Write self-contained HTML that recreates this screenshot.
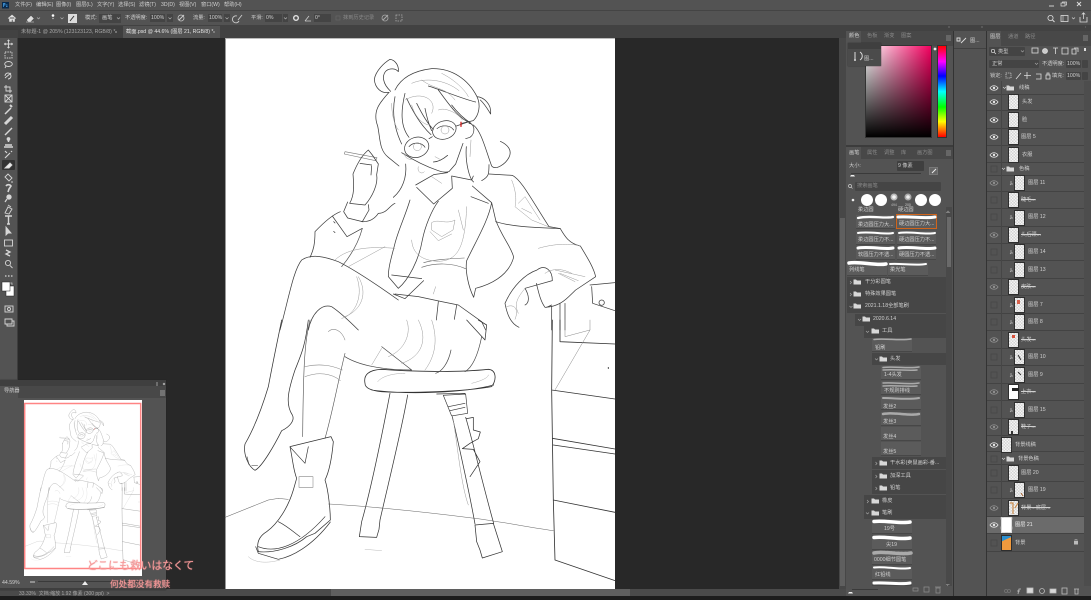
<!DOCTYPE html>
<html><head><meta charset="utf-8"><title>PS</title>
<style>
html,body{margin:0;padding:0;background:#1e1e1e}
#p{position:relative;width:1091px;height:600px;overflow:hidden;background:#535353;font-family:"Liberation Sans","Noto Sans CJK SC",sans-serif;filter:blur(.3px)}
.b{position:absolute}
.t{position:absolute;white-space:nowrap;line-height:1;font-size:5.2px;color:#d0d0d0;margin-top:1.300px}
.d{color:#8a8a8a}
.f{position:absolute;background:#3f3f3f;border-radius:1px}
.r{position:absolute;left:987px;width:97px;border-bottom:1px solid #434343;box-sizing:border-box}
.k{position:absolute;left:847px;background:#464646;height:12px}
.c{position:absolute;background:#5b5b5b;height:14px;box-sizing:border-box;border-bottom:1px solid #474747}
.th{position:absolute;width:9px;height:14px;outline:1px solid #2e2e2e;background-color:#f4f4f4;background-image:linear-gradient(45deg,#d4d4d4 25%,transparent 25%,transparent 75%,#d4d4d4 75%),linear-gradient(45deg,#d4d4d4 25%,transparent 25%,transparent 75%,#d4d4d4 75%);background-size:3px 3px;background-position:0 0,1.500px 1.500px}
svg{position:absolute;left:0;top:0;overflow:visible}
</style></head><body><div id="p">
<!-- base regions -->
<div class="b" style="left:0;top:10px;width:1091px;height:1px;background:#444"></div>
<div class="b" style="left:0;top:25px;width:1091px;height:13px;background:#424242"></div>
<div class="b" style="left:18px;top:26px;width:105px;height:12px;background:#3e3e3e"></div>
<div class="b" style="left:123px;top:26px;width:97px;height:12px;background:#535353"></div>
<div class="b" style="left:0;top:26px;width:18px;height:6px;background:#424242"></div>
<div class="b" style="left:18px;top:38px;width:821px;height:551px;background:#282828"></div>
<div class="b" style="left:225px;top:38px;width:390px;height:551px;background:#fff;border-left:1px solid #999;border-top:1px solid #bbb;box-sizing:border-box"></div>
<!-- vertical scrollbar -->
<div class="b" style="left:839px;top:38px;width:7px;height:558px;background:#474747"></div>
<div class="b" style="left:840px;top:218px;width:5px;height:368px;background:#5f5f5f"></div>
<!-- bottom -->
<div class="b" style="left:0;top:589px;width:846px;height:7px;background:#4a4a4a"></div>
<div class="b" style="left:331px;top:589px;width:299px;height:7px;background:#5f5f5f"></div>
<div class="b" style="left:0;top:596px;width:1091px;height:4px;background:#1c1c1c"></div>
<!-- right docks -->
<div class="b" style="left:846px;top:26px;width:245px;height:5px;background:#424242"></div>
<div class="b" style="left:846px;top:31px;width:107px;height:565px;background:#535353"></div>
<div class="b" style="left:953px;top:31px;width:1px;height:565px;background:#333"></div>
<div class="b" style="left:954px;top:31px;width:32px;height:565px;background:#535353"></div>
<div class="b" style="left:986px;top:31px;width:1px;height:565px;background:#333"></div>
<div class="b" style="left:987px;top:31px;width:104px;height:565px;background:#535353"></div>
<div class="b" style="left:954px;top:48px;width:32px;height:1px;background:#414141"></div>
<div class="b" style="left:846px;top:31px;width:107px;height:15px;background:#484848"></div>
<div class="b" style="left:846px;top:31px;width:15px;height:15px;background:#535353"></div>
<div class="b" style="left:846px;top:145px;width:107px;height:2px;background:#3c3c3c"></div>
<div class="b" style="left:846px;top:147px;width:107px;height:12px;background:#484848"></div>
<div class="b" style="left:846px;top:147px;width:15px;height:12px;background:#535353"></div>
<div class="b" style="left:987px;top:31px;width:104px;height:15px;background:#484848"></div>
<div class="b" style="left:987px;top:31px;width:14px;height:15px;background:#535353"></div>
<div class="b" style="left:1084px;top:81px;width:7px;height:505px;background:#4d4d4d"></div>
<!-- colour -->
<div class="b" style="left:866px;top:46px;width:65px;height:91px;outline:1px solid #333;background:linear-gradient(to bottom,rgba(0,0,0,0),#000),linear-gradient(to right,#fff,#f2005f)"></div>
<div class="b" style="left:938px;top:46px;width:8px;height:91px;outline:1px solid #333;background:linear-gradient(to bottom,#f00 0%,#f0f 17%,#00f 33%,#0ff 50%,#0f0 67%,#ff0 83%,#f00 100%)"></div>
<div class="b" style="left:848px;top:43px;width:33px;height:23px;background:#4b4b4b;box-shadow:0 0 1px #222"></div>
<div class="b" style="left:848px;top:43px;width:33px;height:6px;background:#3f3f3f"></div>
<!-- brush fields -->
<div class="f" style="left:897px;top:161px;width:27px;height:10px"></div>
<div class="b" style="left:929px;top:167px;width:9px;height:8px;background:#666;border:1px solid #777;box-sizing:border-box"></div>
<div class="b" style="left:851px;top:173px;width:70px;height:1px;background:#3a3a3a"></div>
<div class="f" style="left:855px;top:182px;width:86px;height:9px;background:#454545"></div>
<div class="b" style="left:946px;top:207px;width:6px;height:382px;background:#494949"></div>
<div class="b" style="left:947px;top:217px;width:4px;height:50px;background:#6a6a6a"></div>
<!-- brush cells -->
<div class="c" style="left:856px;top:215px;width:39px"></div>
<div class="c" style="left:856px;top:231px;width:39px"></div>
<div class="c" style="left:897px;top:231px;width:39px"></div>
<div class="c" style="left:856px;top:246px;width:39px"></div>
<div class="c" style="left:897px;top:246px;width:39px"></div>
<div class="c" style="left:847px;top:262px;width:40px"></div>
<div class="c" style="left:888px;top:262px;width:40px"></div>
<div class="b" style="left:896px;top:214px;width:41px;height:15px;background:#5b5b5b;border:1.300px solid #d0651c;box-sizing:border-box"></div>
<!-- tree rows -->
<div class="k" style="top:277px;width:99px"></div>
<div class="k" style="top:289px;width:99px"></div>
<div class="k" style="top:301px;width:99px"></div>
<div class="k" style="left:855px;top:314px;width:91px"></div>
<div class="k" style="left:864px;top:326px;width:82px"></div>
<div class="c" style="left:872px;top:338px;width:40px"></div>
<div class="k" style="left:872px;top:353px;width:74px"></div>
<div class="c" style="left:881px;top:366px;width:40px"></div>
<div class="c" style="left:881px;top:381px;width:40px"></div>
<div class="c" style="left:881px;top:396px;width:40px"></div>
<div class="c" style="left:881px;top:412px;width:40px"></div>
<div class="c" style="left:881px;top:427px;width:40px"></div>
<div class="c" style="left:881px;top:442px;width:40px"></div>
<div class="k" style="left:872px;top:457px;width:74px"></div>
<div class="k" style="left:872px;top:470px;width:74px"></div>
<div class="k" style="left:872px;top:482px;width:74px"></div>
<div class="k" style="left:864px;top:495px;width:82px"></div>
<div class="k" style="left:864px;top:507px;width:82px"></div>
<div class="c" style="left:872px;top:520px;width:40px"></div>
<div class="c" style="left:872px;top:536px;width:40px"></div>
<div class="c" style="left:872px;top:551px;width:40px"></div>
<div class="c" style="left:872px;top:566px;width:40px"></div>
<div class="c" style="left:872px;top:581px;width:40px;height:5px"></div>
<div class="b" style="left:846px;top:586px;width:107px;height:10px;background:#535353"></div>
<!-- layer controls -->
<div class="f" style="left:989px;top:47px;width:36px;height:9px;background:#444"></div>
<div class="f" style="left:989px;top:60px;width:50px;height:8px;background:#444"></div>
<div class="f" style="left:1066px;top:60px;width:15px;height:8px;background:#444"></div>
<div class="f" style="left:1082px;top:60px;width:6px;height:8px;background:#444"></div>
<div class="f" style="left:1066px;top:72px;width:15px;height:8px;background:#444"></div>
<div class="f" style="left:1082px;top:72px;width:6px;height:8px;background:#444"></div>
<!-- layer rows -->
<div class="r" style="top:81px;height:14px"></div>
<div class="r" style="top:95px;height:16px"></div>
<div class="r" style="top:111px;height:18px"></div>
<div class="r" style="top:129px;height:17px"></div>
<div class="r" style="top:146px;height:17px"></div>
<div class="r" style="top:163px;height:13px"></div>
<div class="r" style="top:176px;height:16px"></div>
<div class="r" style="top:192px;height:17px"></div>
<div class="r" style="top:209px;height:18px"></div>
<div class="r" style="top:227px;height:17px"></div>
<div class="r" style="top:244px;height:17px"></div>
<div class="r" style="top:261px;height:18px"></div>
<div class="r" style="top:279px;height:17px"></div>
<div class="r" style="top:296px;height:18px"></div>
<div class="r" style="top:314px;height:17px"></div>
<div class="r" style="top:331px;height:18px"></div>
<div class="r" style="top:349px;height:17px"></div>
<div class="r" style="top:366px;height:18px"></div>
<div class="r" style="top:384px;height:17px"></div>
<div class="r" style="top:401px;height:18px"></div>
<div class="r" style="top:419px;height:17px"></div>
<div class="r" style="top:436px;height:16px"></div>
<div class="r" style="top:452px;height:13px"></div>
<div class="r" style="top:465px;height:17px"></div>
<div class="r" style="top:482px;height:17px"></div>
<div class="r" style="top:499px;height:18px"></div>
<div class="r" style="top:517px;height:17px;background:#6b6b6b"></div>
<div class="r" style="top:534px;height:18px"></div>
<div class="b" style="left:1001px;top:81px;width:1px;height:471px;background:#464646"></div>
<!-- thumbs -->
<div class="th" style="left:1009px;top:95px"></div>
<div class="th" style="left:1009px;top:113px"></div>
<div class="th" style="left:1009px;top:130px"></div>
<div class="th" style="left:1009px;top:148px"></div>
<div class="th" style="left:1015px;top:176px"></div>
<div class="th" style="left:1009px;top:193px"></div>
<div class="th" style="left:1015px;top:211px"></div>
<div class="th" style="left:1009px;top:228px"></div>
<div class="th" style="left:1015px;top:245px"></div>
<div class="th" style="left:1015px;top:263px"></div>
<div class="th" style="left:1009px;top:280px"></div>
<div class="th" style="left:1015px;top:298px"></div>
<div class="th" style="left:1015px;top:315px"></div>
<div class="th" style="left:1009px;top:333px"></div>
<div class="th" style="left:1015px;top:350px"></div>
<div class="th" style="left:1015px;top:368px"></div>
<div class="th" style="left:1009px;top:385px;background:#fff"></div>
<div class="th" style="left:1015px;top:403px"></div>
<div class="th" style="left:1009px;top:420px"></div>
<div class="th" style="left:1002px;top:438px"></div>
<div class="th" style="left:1009px;top:466px"></div>
<div class="th" style="left:1015px;top:483px"></div>
<div class="th" style="left:1009px;top:501px"></div>
<div class="b" style="left:1002px;top:518px;width:9px;height:14px;background:#fff;outline:1px solid #ddd"></div>
<div class="b" style="left:1002px;top:536px;width:9px;height:14px;background:linear-gradient(155deg,#2a8fd0 28%,#f09a3e 30%);outline:1px solid #2e2e2e"></div>
<!-- nav panel -->
<div class="b" style="left:0;top:380px;width:166px;height:210px;background:#535353;box-shadow:0 0 1px #222"></div>
<div class="b" style="left:0;top:380px;width:166px;height:6px;background:#3f3f3f"></div>
<div class="b" style="left:0;top:386px;width:166px;height:12px;background:#484848"></div>
<div class="b" style="left:0;top:386px;width:18px;height:12px;background:#535353"></div>
<div class="b" style="left:24px;top:400px;width:118px;height:176px;background:#fff"></div>
<div class="b" style="left:0;top:588px;width:166px;height:2px;background:#3e3e3e"></div>
<!-- toolbar selected -->
<div class="b" style="left:2px;top:160px;width:13px;height:10px;background:#333;border-radius:1px"></div>
<div class="b" style="left:17px;top:38px;width:1px;height:342px;background:#3d3d3d"></div>
<div class="b" style="left:0;top:26px;width:18px;height:4px;background:#3d3d3d"></div>

<svg width="1091" height="600" viewBox="0 0 1091 600" fill="none">
<defs>
<g id="eye"><path d="M-4 0C-2-3 2-3 4 0C2 3-2 3-4 0Z" fill="none" stroke="#e6e6e6" stroke-width=".8"/><circle r="1.200" fill="#e6e6e6"/></g>
<g id="ed"><path d="M-4 0C-2-3 2-3 4 0C2 3-2 3-4 0Z" fill="none" stroke="#8f8f8f" stroke-width=".8"/><circle r="1.200" fill="#8f8f8f"/></g>
<g id="fo"><path d="M-3.500-2.500h2.500l1 1h4v4h-7.500Z" fill="#d8d8d8"/></g>
<g id="clip"><path d="M-1-2v3h2M-1 1l-1 1" stroke="#c0c0c0" stroke-width=".7"/></g>
<g id="art" fill="none" stroke-linecap="round" stroke-linejoin="round">
<g transform="translate(225 40) scale(.33333)" stroke="#3c3c3c" stroke-width="2.200">
<path d="M492 157C470 162 450 145 448 118C452 92 478 68 495 58C512 60 522 78 520 95C512 85 495 84 484 92C470 106 472 130 497 154"/>
<path d="M510 150C530 110 570 92 620 86C680 84 730 118 756 170C775 172 800 190 797 222C792 215 782 195 766 180M756 170C768 195 762 225 745 242L710 250"/>
<path d="M492 157C462 190 442 215 458 258C466 295 462 330 490 352L522 378"/>
<path d="M540 160C528 210 525 258 552 292M510 170C500 220 510 270 530 312M545 175C566 220 590 258 618 284M575 190C590 220 606 250 625 268M600 205C606 235 612 255 620 272M610 138C650 150 716 178 752 186M640 150C670 190 700 236 738 250M680 195C695 215 715 235 738 250"/>
<ellipse cx="658" cy="270" rx="36" ry="27" transform="rotate(-18 658 270)"/>
<ellipse cx="575" cy="322" rx="37" ry="30" transform="rotate(-18 575 322)"/>
<path d="M612 296L622 290M694 258L732 245"/>
<path d="M636 266C650 254 675 254 686 270M552 320C565 305 590 306 600 322" stroke-width="2"/>
<path d="M530 338C552 352 590 375 640 392C652 397 664 397 672 395L692 372L714 310M625 366C642 366 656 356 668 346"/>
<path d="M732 250C750 250 752 280 735 292L722 296M745 255C770 275 782 330 800 378C812 392 842 372 852 352C862 332 850 315 826 304M724 320C720 368 734 418 746 426M792 374C792 402 792 410 770 422"/>
<path d="M542 372C546 412 532 450 505 472"/>
<path d="M572 435L626 404L668 398M575 442L626 492L682 445L680 408L740 420L745 408"/>
<path d="M510 490C492 498 486 520 460 520C447 540 430 546 410 545"/>
<path d="M360 335L456 353L452 362L358 342Z" stroke="#777" stroke-width="1.800"/>
<path d="M384 402C392 382 408 348 430 330L442 345L460 372L455 404C460 432 442 470 420 495L374 490C390 462 386 430 384 402ZM405 370L440 375M440 378L438 405"/>
<path d="M368 486L356 515L368 534L412 545L432 510L430 494"/>
<path d="M346 515C320 525 288 556 270 575C270 610 266 630 255 652M322 528L366 590L412 565M326 545l4 4M326 574l4 4"/>
<path d="M412 565C400 610 375 650 350 680" stroke="#555"/>
<path d="M555 480C540 530 520 570 510 610C500 650 490 680 490 710L520 745C550 720 582 660 592 600C600 560 620 510 640 484"/>
<path d="M742 438L800 488C790 540 760 590 725 662C720 692 730 740 746 772L752 745C792 735 850 710 866 652C860 622 830 590 812 540L800 488M738 470L790 490"/>
<path d="M792 402L862 406C890 420 920 480 972 560L1006 566C1020 590 1032 610 1066 618C1085 650 1105 680 1112 710L1052 750C1030 770 1010 800 960 802C945 782 940 752 934 730"/>
<path d="M812 545C860 560 920 562 1006 566"/>
<path d="M936 690C900 702 862 740 840 790C846 822 856 850 882 862M936 690C960 672 982 690 982 722L900 745C915 770 912 790 900 795"/>
<path d="M590 682C630 668 680 668 722 686M596 668C630 658 680 656 718 654" stroke="#666" stroke-width="1.800"/>
<path d="M500 705L590 716M505 762L540 776L596 722"/>
<path d="M510 762L580 770L650 785L700 795L770 845L782 870M640 785L634 840M695 795L688 838"/>
<path d="M165 870C190 780 205 690 230 660C260 640 300 650 340 665C390 690 450 730 520 780M250 870C260 820 290 790 320 800C350 820 380 850 400 870"/>
<path d="M1095 735L1170 728M1100 740L1103 790L1170 812M980 800L980 870M1005 790L1005 870M1020 790V870M965 802L980 795"/>
<circle cx="1130" cy="788" r="8"/>
<g stroke="#9a9a9a" stroke-width="1.500">
<path d="M860 420C880 470 870 500 870 500L920 540L970 560M880 490L900 470L945 540M890 505L920 520"/>
<path d="M620 548C640 535 662 555 690 540L684 570L650 590L620 570ZM615 575L640 602L680 582M700 510L715 570M560 600C562 640 590 662 640 664C700 662 720 620 725 500M400 710C430 760 410 810 360 830M395 710C420 780 380 830 350 835M940 625C990 610 1040 610 1066 618M990 690L1080 710M1000 700L1050 725M330 660C370 620 450 620 510 625M480 620L370 680"/>
<path d="M540 180C590 150 640 180 620 220M560 130C600 112 660 118 702 152M650 100C690 120 720 150 730 170M590 120C630 150 660 140 690 180M500 190C500 215 505 250 520 270M560 195C570 230 590 250 610 255M640 210C660 200 700 220 712 240M630 350L645 358M580 380C575 395 590 405 598 395M620 410L650 430M632 740L625 762M738 300L735 350M648 270a12 12 0 1 0 24 0a12 12 0 1 0-24 0M565 320a12 12 0 1 0 24 0a12 12 0 1 0-24 0M540 340C535 350 550 360 560 358"/>
<path d="M900 745C880 770 865 790 880 820M845 800C870 790 882 810 870 838M1005 700L1060 722M960 700C990 680 1020 690 1040 700"/>
</g>
<path d="M708 247v12" stroke="#d02020" stroke-width="4"/>
</g>
<g transform="translate(225 320) scale(.33333)" stroke="#333" stroke-width="2.200">
<path d="M170 0C160 50 145 120 130 200C112 260 90 320 60 372C54 402 70 440 90 451C112 440 150 372 170 332C196 320 210 300 202 285C180 252 190 210 210 150C230 100 240 80 250 0"/>
<path d="M66 410l6 24M80 436h18" stroke-width="1.600"/>
<path d="M255 0C240 60 235 120 233 350M360 100C340 180 322 280 300 355" stroke="#555" stroke-width="1.900"/>
<path d="M240 140C280 130 320 135 352 150M240 170C280 155 320 160 346 182M310 35C325 20 350 30 360 60" stroke="#888" stroke-width="1.600"/>
<path d="M195 380L318 350L325 365C320 420 310 460 300 480C310 510 316 570 316 600L270 640L245 650C210 680 150 700 100 695C94 670 100 650 125 635C160 610 190 560 205 510L215 475C205 450 205 430 195 380Z"/>
<path d="M92 680L100 700L160 718C200 710 260 680 316 606M100 680C150 700 220 680 300 590M196 382L240 430L250 380M160 605C190 620 210 640 225 650" stroke-width="2"/>
<rect x="222" y="470" width="42" height="32" stroke="#888" stroke-width="1.700"/>
<path d="M420 190C415 165 430 150 470 148C560 155 700 158 790 148C815 150 815 180 800 200C720 215 550 220 470 215C440 212 420 205 420 190ZM440 210C550 225 720 218 806 195" stroke-width="2.400"/>
<path d="M458 185C470 170 500 160 540 160M740 190C760 185 790 175 790 165" stroke="#aaa" stroke-width="1.500"/>
<path d="M495 220C470 350 440 500 410 605L403 650L455 652L462 628L465 600M548 225C530 330 490 490 465 600"/>
<path d="M635 222L720 220M655 226L722 222L728 280L680 288ZM670 260L720 250M675 272L720 262" stroke-width="1.900"/>
<path d="M682 290C700 370 730 500 750 612M722 292C745 370 770 480 806 610M725 296L745 292L745 330L766 336L760 356L735 370L712 386L745 388L765 425L735 470"/>
<path d="M685 300C700 400 710 500 730 555" stroke="#999" stroke-width="1.500"/>
<path d="M750 615L805 610L832 695L772 714L765 690L755 665Z"/>
<path d="M0 592L130 540L160 535L190 538M310 552C380 555 550 570 750 595C830 605 900 620 985 632" stroke="#666" stroke-width="1.600"/>
<path d="M360 110C400 135 470 150 560 150M470 80L560 150M770 50C760 100 745 140 720 155M678 90C670 130 650 155 632 160" stroke="#444" stroke-width="2"/>
<path d="M440 135L470 85M620 0C640 60 630 110 600 150M580 0C610 60 590 110 530 130M545 0C560 40 540 90 490 110" stroke="#999" stroke-width="1.500"/>
<path d="M725 0L780 60L785 15L760 0"/>
<path d="M982 0L980 210L985 540L990 720L1170 782M980 210L1170 237M982 355L1170 387M985 375L1170 402M985 540L1170 577M1005 0L1005 65L1170 72" stroke-width="2.500"/>
<path d="M1020 0L1020 50L1095 30V0M1095 30L990 210" stroke="#888" stroke-width="1.500"/>
<path d="M70 710C90 730 130 730 165 720M420 688L470 692" stroke="#bbb" stroke-width="1.500"/>
<path d="M1150 143v2" stroke="#222" stroke-width="3"/>
</g>
</g>
<clipPath id="nc"><rect x="24" y="400" width="118" height="176"/></clipPath>
</defs>
<use href="#art"/>
<!-- navigator -->
<g clip-path="url(#nc)" opacity=".8"><g transform="translate(24 403) scale(.3) translate(-225 -38)"><use href="#art"/></g></g>
<rect x="24.700" y="403.500" width="116" height="165" stroke="#ff8484" stroke-width="1.500"/>
<path d="M30 582h5" stroke="#ccc"/><path d="M38 581.500H164" stroke="#3a3a3a" stroke-width="1"/><path d="M82 585l3-4 3 4Z" fill="#eee"/>
<path d="M156 383h2M156 385h2M163 383l2 2M165 383l-2 2M160 391h5M160 393h5M160 395h5" stroke="#bbb" stroke-width=".8"/>
<!-- Ps logo -->
<rect x="2" y="2" width="7" height="6.500" fill="#0a2a4c"/><path d="M3.500 7V3.500h1.500v1.500H3.500M6 5h1.500M6 6.500h1.500" stroke="#4aa8f0" stroke-width=".7"/>
<!-- window controls -->
<path d="M1049 6h5" stroke="#ddd" stroke-width=".9"/><path d="M1061 3h4v3h-4ZM1062.500 3V2h4v3h-1" stroke="#ddd" stroke-width=".7"/><path d="M1077 2l4 4M1081 2l-4 4" stroke="#ddd" stroke-width="1"/>
<circle cx="1050.500" cy="18" r="2.600" stroke="#ddd" stroke-width=".8"/><path d="M1052.500 20l2 2" stroke="#ddd"/>
<rect x="1061" y="15.500" width="7" height="6" stroke="#ddd" stroke-width=".8"/><path d="M1063 15.500v6M1072 17.500l1.500 1.500 1.500-1.500" stroke="#ddd" stroke-width=".6"/>
<path d="M1080 17v5h7v-5M1083.500 19v-6M1081.800 14.500l1.700-1.700 1.700 1.700" stroke="#ddd" stroke-width=".8"/>
<!-- options bar icons -->
<path d="M8 18.500l4-3.500 4 3.500M9.500 17.500v4h2v-2h1.500v2h1.500v-4" fill="#e0e0e0" stroke="#e0e0e0" stroke-width=".6"/>
<path d="M27 20l4-4 2.500 2.500-3 3h-2ZM26 22h8" fill="#ddd" stroke="#ddd" stroke-width=".5"/><path d="M37 17.500l1.500 1.500 1.500-1.500M60.500 17.500l1.500 1.500 1.500-1.500" stroke="#bbb" stroke-width=".6"/>
<circle cx="53" cy="15.500" r="1.300" fill="#fff"/><circle cx="53" cy="18.500" r=".7" fill="#fff" opacity=".7"/>
<rect x="68" y="14" width="9" height="9" fill="#dcdcdc"/><path d="M70 21l4-5" stroke="#333" stroke-width="1"/>
<rect x="99" y="14" width="22" height="9" fill="#444"/><rect x="150" y="14" width="15" height="8" fill="#444"/><rect x="167" y="14" width="6" height="8" fill="#444"/><rect x="208" y="14" width="14" height="8" fill="#444"/><rect x="224" y="14" width="6" height="8" fill="#444"/><rect x="265" y="14" width="17" height="8" fill="#444"/><rect x="283" y="14" width="5" height="8" fill="#444"/><rect x="314" y="14" width="17" height="8" fill="#444"/>
<path d="M117 17.500l1.500 1.500 1.500-1.500M168.500 17.500l1.500 1.500 1.500-1.500M225.500 17.500l1.500 1.500 1.500-1.500M284 17.500l1.500 1.500 1.500-1.500" stroke="#bbb" stroke-width=".6"/>
<circle cx="181" cy="18" r="3" stroke="#ccc" stroke-width=".8"/><path d="M179 20l5-5" stroke="#ccc"/>
<path d="M237 16a3.500 3.500 0 1 0 2 5M238 20l4-5" stroke="#ccc" stroke-width=".9"/>
<circle cx="296" cy="18" r="2.300" stroke="#e4e4e4" stroke-width="1.400"/>
<path d="M305 21l4-5M305 21h6" stroke="#ccc" stroke-width=".8"/>
<rect x="336" y="16" width="4" height="4" stroke="#666" stroke-width=".7"/>
<circle cx="385" cy="18" r="3" stroke="#aaa" stroke-width=".8"/><path d="M383 20l5-5" stroke="#aaa"/>
<rect x="396" y="15" width="6" height="6" stroke="#aaa" stroke-width=".8" stroke-dasharray="1.500 1"/>
<!-- tabs close -->
<path d="M115 31l2 2M117 31l-2 2M213 31l2 2M215 31l-2 2" stroke="#aaa" stroke-width=".5"/>
<!-- toolbar icons -->
<g stroke="#d6d6d6" stroke-width=".9" fill="none">
<path d="M8.500 40v8M4.500 44h8M7.500 41l1-1 1 1M7.500 47l1 1 1-1M5.500 43l-1 1 1 1M11.500 43l1 1-1 1"/>
<rect x="5" y="52" width="7" height="6" stroke-dasharray="1.400 1"/>
<ellipse cx="8.500" cy="64" rx="3.800" ry="2.500"/><path d="M6 66l-1 2"/>
<path d="M5 78l6-5M5 76a3 3 0 1 1 3 3" /><path d="M6 85v6h6M4 87h6v6"/><rect x="5" y="95" width="7" height="7"/><path d="M5 95l7 7M12 95l-7 7"/>
<path d="M5 114l6-6" stroke-width="1.500"/><path d="M10 105l2 2" stroke-width="2"/>
<path d="M5 124l7-7" stroke-width="3"/><path d="M5 135l5-5 2-2" stroke-width="1.400"/>
<path d="M8.500 139v3M5 145h7M4 147h9" stroke-width="1.500"/><circle cx="8.500" cy="139" r="1.400" fill="#d6d6d6"/>
<path d="M5 158l5-5M5 151l2 2M11 151l1 1" stroke-width="1.200"/>
<path d="M5 168l5-5 2 2-3 3Z" fill="#eee"/>
<path d="M5 177l3-3 4 4-3 3ZM12 181v2"/>
<path d="M6 186a3 3 0 0 1 5 0l-2 3-1 3" stroke-width="1.600"/>
<circle cx="9" cy="197" r="2.200" fill="#d6d6d6"/><path d="M7 199l-2 3" stroke-width="1.200"/>
<path d="M5 213l3-6 4 2-3 5ZM8 205l3 2"/>
<path d="M5 216h7M8.500 216v8M7 224h3" stroke-width="1.400"/>
<path d="M6 227v8l2-2 3 0Z" fill="#d6d6d6"/>
<rect x="4.500" y="240" width="8" height="6"/>
<path d="M6 250l4 2-4 2 4 2" stroke-width="1.300"/>
<circle cx="8" cy="263" r="2.600"/><path d="M10 265.500l2.500 2.500"/>
<path d="M5 276h1.500M8 276h1.500M11 276h1.500" stroke-width="1.300"/>
<rect x="5" y="306" width="8" height="6"/><circle cx="9" cy="309" r="1.500"/>
<path d="M5 319h7v5h-7ZM7 324v2h7v-5h-2"/>
</g>
<rect x="3" y="283" width="3" height="3" fill="#111" stroke="#ddd" stroke-width=".5"/>
<path d="M10 283h2v2" stroke="#ccc" stroke-width=".7"/>
<rect x="6" y="286" width="8" height="10" fill="#fff" stroke="#222" stroke-width=".5"/>
<rect x="2" y="282" width="8" height="9" fill="#fff" stroke="#222" stroke-width=".5"/>
<!-- right panel small icons -->
<path d="M946 36h5M946 38h5M946 40h5M946 151h5M946 153h5M946 155h5M1083 36h5M1083 38h5M1083 40h5" stroke="#999" stroke-width=".7"/>
<path d="M948 27.500l1-1M950 27.500l-1-1M981 27.500l1-1M983 27.500l-1-1M1085 27.500l1-1" stroke="#999" stroke-width=".5"/>
<path d="M855 52v8M860 52c3 2 3 6 0 8" stroke="#ddd" stroke-width="1"/><circle cx="855" cy="60" r="1" fill="#ddd"/>
<path d="M957 38h3v3h-3Z M961 43l5-5" stroke="#ddd" stroke-width=".9"/>
<circle cx="935" cy="49" r="1.400" fill="#eee"/>
<path d="M851 175h3l1 1.500h-5Z" fill="#eee"/>
<path d="M932 173l4-4" stroke="#eee" stroke-width="1"/>
<circle cx="850" cy="186" r="1.500" stroke="#ccc" stroke-width=".7"/><path d="M851 187l1.500 1.500" stroke="#ccc" stroke-width=".6"/>
<circle cx="853" cy="200" r="1.300" fill="#eee"/>
<circle cx="867" cy="200" r="6" fill="#fff"/><circle cx="881" cy="200" r="6" fill="#fff"/><circle cx="921" cy="200" r="6" fill="#fff"/><circle cx="935" cy="200" r="6" fill="#fff"/>
<circle cx="894" cy="197" r="3.500" fill="#bbb"/><circle cx="894" cy="197" r="1.800" fill="#f4f4f4"/><circle cx="908" cy="197" r="3.500" fill="#aaa"/><circle cx="908" cy="197" r="1.800" fill="#eee"/>
<!-- brush strokes -->
<g stroke="#fff" stroke-linecap="round">
<path d="M858 218C870 215 885 219 893 217" stroke-width="2.300"/>
<path d="M898 217C910 216 925 219 935 217" stroke-width="3"/>
<path d="M858 233C870 231 885 235 893 233" stroke-width="2"/><path d="M899 233C910 231 925 235 935 233" stroke-width="2"/>
<path d="M858 248C870 246 885 250 893 248" stroke-width="3"/><path d="M899 248C910 246 925 250 935 248" stroke-width="3"/>
<path d="M849 263C860 261 875 266 886 264" stroke-width="3.500"/><path d="M890 264C900 263 915 266 926 264" stroke-width="2"/>
<path d="M874 521.500C885 520 900 524 910 522" stroke-width="3.500"/><path d="M874 537.500C885 536 900 540 910 538" stroke-width="3.500"/>
<path d="M874 567.500C885 566 900 570 910 568" stroke-width="2"/><path d="M874 583C885 582 900 585 910 583" stroke-width="3"/>
</g>
<g stroke="#aaa" stroke-linecap="round"><path d="M874 339.500C885 338 900 341 911 339" stroke-width="1.500"/><path d="M883 367.500C895 366 908 369 919 367M883 370C895 369 908 371 917 370" stroke-width="1.500"/><path d="M883 383C895 382 908 385 919 383M883 386C895 385 908 387 917 386" stroke-width="1.500"/><path d="M883 398C895 398 908 400 919 398" stroke-width="2"/><path d="M883 414C895 412 908 416 919 414" stroke-width="2.500" stroke-dasharray="3 .6"/><path d="M874 553C885 551 900 555 911 553" stroke-width="3.500" stroke-dasharray="3 .5"/></g>
<!-- tree folders -->
<use href="#fo" x="857" y="282"/><use href="#fo" x="857" y="294"/><use href="#fo" x="857" y="306"/><use href="#fo" x="866" y="319"/><use href="#fo" x="875" y="331"/><use href="#fo" x="883" y="359"/><use href="#fo" x="883" y="463"/><use href="#fo" x="883" y="476"/><use href="#fo" x="883" y="488"/><use href="#fo" x="875" y="501"/><use href="#fo" x="875" y="513"/>
<g stroke="#aaa" stroke-width=".6"><path d="M850 281l1.500 1.500-1.500 1.500M850 293l1.500 1.500-1.500 1.500M849.500 306l1.500 1.500 1.500-1.500M858 319l1.500 1.500 1.500-1.500M866 331l1.500 1.500 1.500-1.500M875 358.500l1.500 1.500 1.500-1.500M875.500 462l1.500 1.500-1.500 1.500M875.500 475l1.500 1.500-1.500 1.500M875.500 487l1.500 1.500-1.500 1.500M867 500l1.500 1.500-1.500 1.500M866 512.500l1.500 1.500 1.500-1.500"/></g>
<path d="M913 588h5v3h-5ZM924 587h5v5h-5ZM936 588h4v5h-4ZM935 587h6M948 211l-1.500 1.500h3ZM948 586l-1.500-1.500h3" stroke="#8f8f8f" stroke-width=".7"/>
<path d="M849 592h3l1 1.500h-5Z" fill="#eee"/><path d="M852 589.500h26" stroke="#3a3a3a"/>
<!-- layers filter icons -->
<circle cx="993" cy="51" r="1.700" stroke="#ddd" stroke-width=".7"/><path d="M994.500 52.500l1.500 1.500" stroke="#ddd" stroke-width=".7"/>
<path d="M1021 50.500l1.500 1.500 1.500-1.500" stroke="#aaa" stroke-width=".6"/>
<path d="M1035 63l1.500 1.500 1.500-1.500" stroke="#aaa" stroke-width=".6"/>
<g stroke="#ddd" stroke-width=".8"><rect x="1032" y="48" width="6" height="5"/><circle cx="1045" cy="51" r="2.500" fill="#ccc"/><path d="M1053 48h5M1055.500 48v6M1062 48h6v6h-6ZM1072 49h4v5h-4ZM1074 48h4v4"/><path d="M1085 48v3" stroke-width="2"/></g>
<g stroke="#ddd" stroke-width=".8"><rect x="1006" y="73" width="5" height="5" stroke-dasharray="1 .8"/><path d="M1016 79l5-6M1027 72v7M1024 75.500h7M1036 74h5v5h-5M1046 75h4v4h-4ZM1047 75v-2h2v2"/></g>
<g stroke="#ddd" stroke-width=".6"><path d="M1003 87l1.500 1.500 1.500-1.500M1002 168l1.500 1.500 1.500-1.500M1002 458l1.500 1.500 1.500-1.500"/></g>
<use href="#fo" x="1010" y="88"/><use href="#fo" x="1010" y="169"/><use href="#fo" x="1010" y="459"/>
<!-- eyes -->
<use href="#eye" x="994" y="88"/><use href="#eye" x="994" y="102"/><use href="#eye" x="994" y="120"/><use href="#eye" x="994" y="137"/><use href="#eye" x="994" y="155"/>
<use href="#ed" x="994" y="183"/><use href="#ed" x="994" y="235"/><use href="#ed" x="994" y="287"/><use href="#ed" x="994" y="340"/><use href="#ed" x="994" y="392"/><use href="#ed" x="994" y="427"/><use href="#eye" x="994" y="445"/><use href="#ed" x="994" y="508"/><use href="#eye" x="994" y="525"/>
<g stroke="#484848" stroke-width=".8"><rect x="991" y="166" width="6" height="6"/><rect x="991" y="197" width="6" height="6"/><rect x="991" y="214" width="6" height="6"/><rect x="991" y="249" width="6" height="6"/><rect x="991" y="267" width="6" height="6"/><rect x="991" y="302" width="6" height="6"/><rect x="991" y="319" width="6" height="6"/><rect x="991" y="354" width="6" height="6"/><rect x="991" y="372" width="6" height="6"/><rect x="991" y="407" width="6" height="6"/><rect x="991" y="456" width="6" height="6"/><rect x="991" y="470" width="6" height="6"/><rect x="991" y="487" width="6" height="6"/><rect x="991" y="540" width="6" height="6"/></g>
<use href="#clip" x="1012" y="183"/><use href="#clip" x="1012" y="217"/><use href="#clip" x="1012" y="252"/><use href="#clip" x="1012" y="270"/><use href="#clip" x="1012" y="305"/><use href="#clip" x="1012" y="322"/><use href="#clip" x="1012" y="357"/><use href="#clip" x="1012" y="375"/><use href="#clip" x="1012" y="410"/><use href="#clip" x="1012" y="490"/>
<!-- thumb marks -->
<rect x="1017" y="300" width="3" height="4" fill="#d8604a"/><rect x="1012" y="335" width="3" height="3" fill="#d8503a"/><rect x="1012" y="388" width="7" height="3" fill="#222"/><path d="M1018 355l3 5M1018 372l3 3" stroke="#333"/><rect x="1011" y="431" width="2" height="3" fill="#333"/><path d="M1010 503h3v11M1018 503l-3 5" stroke="#c98a4a" stroke-width="1.200"/><path d="M1021 493l2 3" stroke="#a06030"/>
<rect x="1074" y="541" width="4" height="3.500" fill="#bbb"/><path d="M1075 541v-1.500h2v1.500" stroke="#bbb" stroke-width=".6"/>
<rect x="1001" y="517.500" width="11" height="15" stroke="#ccc" stroke-width=".6" stroke-dasharray="3 7"/>
<!-- layers footer -->
<g stroke="#bdbdbd" stroke-width=".8"><circle cx="1006" cy="591" r="1.500" stroke="#777"/><circle cx="1009" cy="591" r="1.500" stroke="#777"/><path d="M1018 594l1-5h2M1017 591h3"/><rect x="1027" y="588" width="6" height="5" fill="#d8d8d8"/><circle cx="1042" cy="591" r="2.500"/><path d="M1050 589h6v4h-6Z" fill="#d8d8d8"/><rect x="1062" y="588" width="5" height="6"/><path d="M1074 589h5M1075 589v5h3v-5"/></g>
</svg>

<!-- menu -->
<div class="t" style="left:15px;top:2px">文件(F)</div><div class="t" style="left:36px;top:2px">编辑(E)</div><div class="t" style="left:56px;top:2px">图像(I)</div><div class="t" style="left:76px;top:2px">图层(L)</div><div class="t" style="left:97px;top:2px">文字(Y)</div><div class="t" style="left:118px;top:2px">选择(S)</div><div class="t" style="left:139px;top:2px">滤镜(T)</div><div class="t" style="left:161px;top:2px">3D(D)</div><div class="t" style="left:179px;top:2px">视图(V)</div><div class="t" style="left:201px;top:2px">窗口(W)</div><div class="t" style="left:224px;top:2px">帮助(H)</div>
<!-- options -->
<div class="t" style="left:85px;top:15px">模式:</div><div class="t" style="left:102px;top:15px">画笔</div><div class="t" style="left:125px;top:15px">不透明度:</div><div class="t" style="left:151px;top:15px">100%</div><div class="t" style="left:193px;top:15px">流量:</div><div class="t" style="left:209px;top:15px">100%</div><div class="t" style="left:251px;top:15px">平滑:</div><div class="t" style="left:266px;top:15px">0%</div><div class="t" style="left:315px;top:15px">0°</div><div class="t d" style="left:343px;top:15px">抹到历史记录</div>
<!-- tabs -->
<div class="t d" style="left:21px;top:29px;color:#a8a8a8">未标题-1 @ 205% (123123123, RGB/8) *</div><div class="t" style="left:126px;top:29px;color:#e2e2e2">截面.psd @ 44.6% (图层 21, RGB/8) *</div>
<!-- tabs panels -->
<div class="t" style="left:849px;top:33px">颜色</div><div class="t d" style="left:867px;top:33px">色板</div><div class="t d" style="left:884px;top:33px">渐变</div><div class="t d" style="left:901px;top:33px">图案</div>
<div class="t" style="left:864px;top:56px">图...</div><div class="t" style="left:970px;top:38px">图...</div>
<div class="t" style="left:849px;top:150px">画笔</div><div class="t d" style="left:867px;top:150px">属性</div><div class="t d" style="left:884px;top:150px">调整</div><div class="t d" style="left:901px;top:150px">库</div><div class="t d" style="left:917px;top:150px">画方图</div>
<div class="t" style="left:849px;top:163px">大小:</div><div class="t" style="left:898px;top:163px">9 像素</div><div class="t d" style="left:857px;top:183px">搜索画笔</div>
<div class="t d" style="left:891px;top:203px;font-size:3.500px;color:#bbb">494</div><div class="t" style="left:905px;top:203px;font-size:3.500px">200</div>
<div class="t" style="left:858px;top:207px">柔边圆</div><div class="t" style="left:898px;top:207px">硬边圆</div>
<div class="t" style="left:858px;top:222px">柔边圆压力大...</div><div class="t" style="left:899px;top:221px">硬边圆压力大...</div>
<div class="t" style="left:858px;top:237px">柔边圆压力不...</div><div class="t" style="left:899px;top:237px">硬边圆压力不...</div>
<div class="t" style="left:858px;top:252px">软圆压力不透...</div><div class="t" style="left:899px;top:252px">硬圆压力不透...</div>
<div class="t" style="left:849px;top:267px">列线笔</div><div class="t" style="left:890px;top:267px">柔光笔</div>
<div class="t" style="left:865px;top:279px">干分彩圆笔</div><div class="t" style="left:865px;top:291px">特殊效果圆笔</div><div class="t" style="left:865px;top:303px">2021.1.18全部笔刷</div><div class="t" style="left:873px;top:316px">2020.6.14</div><div class="t" style="left:882px;top:328px">工具</div><div class="t" style="left:875px;top:345px">铅刷</div><div class="t" style="left:890px;top:356px">头发</div><div class="t" style="left:884px;top:372px">1-4头发</div><div class="t" style="left:884px;top:388px">不规则排线</div><div class="t" style="left:883px;top:404px">发丝2</div><div class="t" style="left:883px;top:419px">发丝3</div><div class="t" style="left:883px;top:434px">发丝4</div><div class="t" style="left:883px;top:449px">发丝5</div><div class="t" style="left:890px;top:460px">干水彩(卖鼠画彩-番...</div><div class="t" style="left:890px;top:473px">加深工具</div><div class="t" style="left:890px;top:485px">铅笔</div><div class="t" style="left:882px;top:498px">橡皮</div><div class="t" style="left:882px;top:510px">笔刷</div><div class="t" style="left:884px;top:526px">19号</div><div class="t" style="left:886px;top:542px">尖19</div><div class="t" style="left:874px;top:557px">0000细节圆笔</div><div class="t" style="left:875px;top:572px">红铅线</div>
<!-- layers -->
<div class="t" style="left:990px;top:34px">图层</div><div class="t d" style="left:1008px;top:34px">通道</div><div class="t d" style="left:1025px;top:34px">路径</div>
<div class="t" style="left:998px;top:49px">类型</div><div class="t" style="left:992px;top:61px">正常</div><div class="t" style="left:1042px;top:61px">不透明度:</div><div class="t" style="left:1067px;top:61px">100%</div><div class="t" style="left:990px;top:73px">锁定:</div><div class="t" style="left:1052px;top:73px">填充:</div><div class="t" style="left:1067px;top:73px">100%</div>
<div class="t" style="left:1019px;top:85px">线稿</div><div class="t" style="left:1022px;top:99px">头发</div><div class="t" style="left:1022px;top:117px">脸</div><div class="t" style="left:1021px;top:134px">图层 5</div><div class="t" style="left:1022px;top:152px">衣服</div><div class="t" style="left:1019px;top:166px">色稿</div><div class="t" style="left:1028px;top:180px">图层 11</div><div class="t" style="left:1021px;top:197px;text-decoration:line-through">睫毛...</div><div class="t" style="left:1028px;top:214px">图层 12</div><div class="t" style="left:1021px;top:232px;text-decoration:line-through">头后颈...</div><div class="t" style="left:1028px;top:249px">图层 14</div><div class="t" style="left:1028px;top:267px">图层 13</div><div class="t" style="left:1021px;top:284px;text-decoration:line-through">皮肤...</div><div class="t" style="left:1028px;top:302px">图层 7</div><div class="t" style="left:1028px;top:319px">图层 8</div><div class="t" style="left:1021px;top:337px;text-decoration:line-through">头发...</div><div class="t" style="left:1028px;top:354px">图层 10</div><div class="t" style="left:1028px;top:372px">图层 9</div><div class="t" style="left:1021px;top:389px;text-decoration:line-through">上衣...</div><div class="t" style="left:1028px;top:407px">图层 15</div><div class="t" style="left:1021px;top:424px;text-decoration:line-through">鞋子...</div><div class="t" style="left:1015px;top:442px">背景线稿</div><div class="t" style="left:1018px;top:456px">背景色稿</div><div class="t" style="left:1021px;top:470px">图层 20</div><div class="t" style="left:1028px;top:487px">图层 19</div><div class="t" style="left:1021px;top:505px;text-decoration:line-through">背景...底层...</div><div class="t" style="left:1015px;top:522px;color:#eee">图层 21</div><div class="t" style="left:1015px;top:540px">背景</div>
<!-- nav text -->
<div class="t" style="left:4px;top:388px">导航器</div><div class="t" style="left:2px;top:580px">44.59%</div>
<div class="t" style="left:19px;top:591px;color:#aaa;font-size:5px">33.33%&nbsp; 文档:缩放 1.92 像素 (300 ppi)&nbsp; &gt;</div>
<div class="t" style="left:87px;top:560px;font-size:10.800px;color:#f59a9a;text-shadow:0 0 1px #f08a8a">どこにも救いはなくて</div>
<div class="t" style="left:110px;top:579px;font-size:8.600px;color:#f59a9a;text-shadow:0 0 1px #f08a8a">何处都没有救赎</div>
</div></body></html>
